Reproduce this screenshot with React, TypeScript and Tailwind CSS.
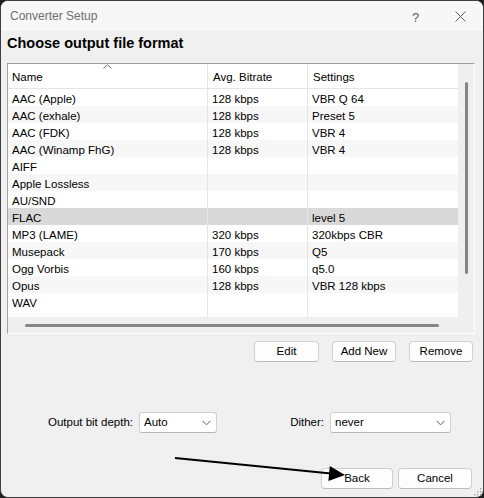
import React from "react";

type Row = { name: string; bitrate: string; settings: string };

const ROWS: Row[] = [
  { name: "AAC (Apple)", bitrate: "128 kbps", settings: "VBR Q 64" },
  { name: "AAC (exhale)", bitrate: "128 kbps", settings: "Preset 5" },
  { name: "AAC (FDK)", bitrate: "128 kbps", settings: "VBR 4" },
  { name: "AAC (Winamp FhG)", bitrate: "128 kbps", settings: "VBR 4" },
  { name: "AIFF", bitrate: "", settings: "" },
  { name: "Apple Lossless", bitrate: "", settings: "" },
  { name: "AU/SND", bitrate: "", settings: "" },
  { name: "FLAC", bitrate: "", settings: "level 5" },
  { name: "MP3 (LAME)", bitrate: "320 kbps", settings: "320kbps CBR" },
  { name: "Musepack", bitrate: "170 kbps", settings: "Q5" },
  { name: "Ogg Vorbis", bitrate: "160 kbps", settings: "q5.0" },
  { name: "Opus", bitrate: "128 kbps", settings: "VBR 128 kbps" },
  { name: "WAV", bitrate: "", settings: "" },
];

const SELECTED = "FLAC";

function Chevron() {
  return (
    <svg width="9" height="6" viewBox="0 0 9 6" className="shrink-0">
      <path d="M0.5 0.8 L4.5 4.8 L8.5 0.8" fill="none" stroke="#5a5a5a" strokeWidth="1" />
    </svg>
  );
}

function Button({ label, width }: { label: string; width: string }) {
  return (
    <button
      className={`${width} h-[21px] rounded-[4px] border border-[#d0d0d0] border-b-[#bcbcbc] bg-[#fdfdfd] text-[11.5px] text-black leading-none flex items-center justify-center pt-[1px]`}
    >
      {label}
    </button>
  );
}

function Select({ value, width }: { value: string; width: string }) {
  return (
    <div
      className={`${width} h-[21px] rounded-[3px] border border-[#d0d0d0] border-b-[#b5b5b5] bg-white flex items-center justify-between pl-[4px] pr-[5px]`}
    >
      <span className="text-[11.5px] text-black pt-[1px]">{value}</span>
      <Chevron />
    </div>
  );
}

export default function App() {
  return (
    <div className="relative w-[484px] h-[498px] bg-[#1f1f1f] font-['Liberation_Sans',Arial,sans-serif] text-black">
      <div className="w-[484px] h-[498px] rounded-[8px] border border-[#3f3f3f] bg-[#f0f0f0] overflow-hidden flex flex-col">
        {/* Title bar */}
        <div className="h-[30px] shrink-0 bg-[#f7f7f7] flex items-center pl-[9px] relative">
          <span className="text-[12px] text-[#6f6f6f]">Converter Setup</span>
          <span className="absolute left-[411px] top-[7px] text-[13px] text-[#5c5c5c]">?</span>
          <svg className="absolute left-[454px] top-[10px]" width="11" height="11" viewBox="0 0 11 11">
            <path d="M0.5 0.5 L10.5 10.5 M10.5 0.5 L0.5 10.5" stroke="#5c5c5c" strokeWidth="1" />
          </svg>
        </div>

        {/* Heading */}
        <div className="h-[32px] shrink-0 pl-[6px] pt-[3px]">
          <h1 className="text-[14.5px] font-bold leading-[18px]">Choose output file format</h1>
        </div>

        {/* List view */}
        <div className="ml-[6px] w-[468px] h-[271px] shrink-0 border border-[#a0a0a0] border-r-white border-b-white grid grid-cols-[450px_16px] grid-rows-[253px_16px]">
          <div className="bg-white overflow-hidden flex flex-col text-[11.5px]">
            <div className="relative h-[25px] shrink-0 flex border-b border-[#e5e5e5]">
              <div className="w-[200px] border-r border-[#e5e5e5] pl-[4px] flex items-center pt-[4px]">Name</div>
              <div className="w-[100px] border-r border-[#e5e5e5] pl-[5px] flex items-center pt-[4px]">Avg. Bitrate</div>
              <div className="flex-1 pl-[5px] flex items-center pt-[4px]">Settings</div>
              <svg className="absolute left-[95px] top-[0px]" width="9" height="5" viewBox="0 0 9 5">
                <path d="M0.5 4.5 L4.5 0.8 L8.5 4.5" fill="none" stroke="#6a6a6a" strokeWidth="1" />
              </svg>
            </div>
            {ROWS.map((r, i) => {
              const bg = r.name === SELECTED ? "bg-[#d9d9d9]" : i % 2 === 1 ? "bg-[#f7f7f7]" : "bg-white";
              return (
                <div key={r.name} className={`h-[17px] shrink-0 flex pt-[4px] leading-[13px] ${bg}`}>
                  <div className="w-[200px] border-r border-[#e5e5e5] -mt-[4px] pt-[4px] pl-[4px] whitespace-nowrap">{r.name}</div>
                  <div className="w-[100px] border-r border-[#e5e5e5] -mt-[4px] pt-[4px] pl-[4px] whitespace-nowrap">{r.bitrate}</div>
                  <div className="flex-1 pl-[4px] whitespace-nowrap">{r.settings}</div>
                </div>
              );
            })}
            <div className="flex-1 flex">
              <div className="w-[200px] border-r border-[#e5e5e5]" />
              <div className="w-[100px] border-r border-[#e5e5e5]" />
            </div>
          </div>
          {/* vertical scrollbar */}
          <div className="bg-[#efefef] pt-[18px] pl-[7px]">
            <div className="w-[2.5px] h-[192px] rounded-full bg-[#858585]" />
          </div>
          {/* horizontal scrollbar */}
          <div className="bg-[#efefef] pl-[17px] pt-[7px]">
            <div className="w-[414px] h-[2.5px] rounded-full bg-[#858585]" />
          </div>
          <div className="bg-[#efefef]" />
        </div>

        {/* List buttons */}
        <div className="mt-[7px] pr-[10px] flex justify-end gap-[13px] shrink-0">
          <Button label="Edit" width="w-[65px]" />
          <Button label="Add New" width="w-[64px]" />
          <Button label="Remove" width="w-[64px]" />
        </div>

        {/* Output options */}
        <div className="mt-[50px] flex items-center shrink-0">
          <div className="w-[216px] flex items-center justify-end gap-[6px]">
            <span className="text-[11.5px]">Output bit depth:</span>
            <Select value="Auto" width="w-[78px]" />
          </div>
          <div className="w-[234px] flex items-center justify-end gap-[6px]">
            <span className="text-[11.5px]">Dither:</span>
            <Select value="never" width="w-[121px]" />
          </div>
        </div>

        {/* Dialog buttons */}
        <div className="mt-[35px] pr-[11px] flex justify-end gap-[5px] shrink-0">
          <Button label="Back" width="w-[72px]" />
          <Button label="Cancel" width="w-[74px]" />
        </div>
      </div>

      {/* Annotation arrow */}
      <svg className="absolute left-0 top-0 pointer-events-none" width="484" height="498" viewBox="0 0 484 498">
        <line x1="175" y1="458" x2="331" y2="473.5" stroke="#000" strokeWidth="2" />
        <polygon points="345,475 328.4,481 329.8,466" fill="#000" />
      </svg>

      {/* Resize grip */}
      <svg className="absolute left-[473px] top-[487px] pointer-events-none" width="10" height="10" viewBox="0 0 10 10">
        {[
          [7, 1],
          [4, 4],
          [7, 4],
          [1, 7],
          [4, 7],
          [7, 7],
        ].map(([x, y]) => (
          <rect key={`${x}-${y}`} x={x} y={y} width="1.5" height="1.5" fill="#a8a8a8" />
        ))}
      </svg>
    </div>
  );
}
